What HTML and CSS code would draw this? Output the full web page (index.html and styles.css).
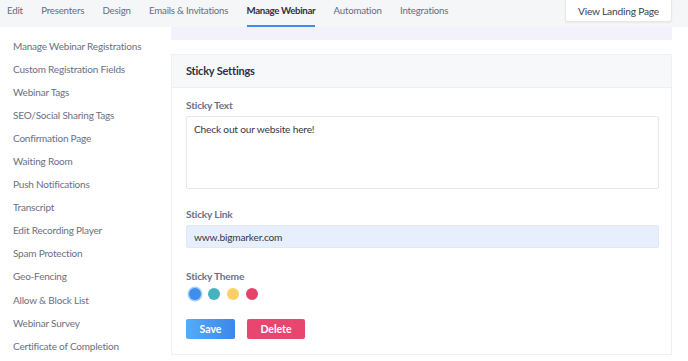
FILE: index.html
```html
<!DOCTYPE html>
<html lang="en">
<head>
    <meta charset="UTF-8">
    <meta name="viewport" content="width=device-width, initial-scale=1.0">
    <title>Manage Webinar</title>
    <link rel="stylesheet" href="styles.css">
</head>
<body>
    <div class="topbar">
        <nav class="tabs">
            <a href="#">Edit</a>
            <a href="#">Presenters</a>
            <a href="#">Design</a>
            <a href="#">Emails &amp; Invitations</a>
            <a href="#" class="active">Manage Webinar</a>
            <a href="#">Automation</a>
            <a href="#">Integrations</a>
        </nav>
        <button class="landing-btn">View Landing Page</button>
    </div>

    <div class="layout">
        <aside class="sidebar">
            <a href="#">Manage Webinar Registrations</a>
            <a href="#">Custom Registration Fields</a>
            <a href="#">Webinar Tags</a>
            <a href="#">SEO/Social Sharing Tags</a>
            <a href="#">Confirmation Page</a>
            <a href="#">Waiting Room</a>
            <a href="#">Push Notifications</a>
            <a href="#">Transcript</a>
            <a href="#">Edit Recording Player</a>
            <a href="#">Spam Protection</a>
            <a href="#">Geo-Fencing</a>
            <a href="#">Allow &amp; Block List</a>
            <a href="#">Webinar Survey</a>
            <a href="#">Certificate of Completion</a>
        </aside>

        <main class="main">
            <div class="banner"></div>

            <section class="card">
                <div class="card-header">Sticky Settings</div>
                <div class="card-body">
                    <div class="form-group">
                        <label for="stickyText">Sticky Text</label>
                        <textarea id="stickyText">Check out our website here!</textarea>
                    </div>
                    <div class="form-group link-group">
                        <label for="stickyLink">Sticky Link</label>
                        <input type="text" id="stickyLink" value="www.bigmarker.com">
                    </div>
                    <div class="form-group">
                        <label>Sticky Theme</label>
                        <div class="swatches">
                            <span class="swatch blue selected"></span>
                            <span class="swatch teal"></span>
                            <span class="swatch yellow"></span>
                            <span class="swatch pink"></span>
                        </div>
                    </div>
                    <div class="actions">
                        <button class="btn btn-save">Save</button>
                        <button class="btn btn-delete">Delete</button>
                    </div>
                </div>
            </section>
        </main>
    </div>
</body>
</html>
```

FILE: styles.css
```css
* {
    margin: 0;
    padding: 0;
    box-sizing: border-box;
}

body {
    font-family: Lato, "Open Sans", sans-serif;
    background-color: white;
    color: #5f6579;
    font-size: 10px;
    letter-spacing: -0.2px;
}

a {
    text-decoration: none;
    color: inherit;
}

.topbar {
    display: flex;
    justify-content: space-between;
    height: 27px;
    padding: 0 16px 0 7px;
    background-color: #f5f6f8;
}

.tabs {
    display: flex;
    gap: 18.3px;
}

.tabs a {
    padding-top: 4px;
    height: 27px;
    line-height: 13px;
    font-size: 9.7px;
    color: #666c7e;
    border-bottom: 2px solid transparent;
}

.tabs a.active {
    color: #2f3344;
    font-weight: 700;
    letter-spacing: -0.35px;
    border-bottom-color: #3d8de9;
}

.landing-btn {
    align-self: flex-start;
    width: 107px;
    height: 22px;
    background-color: white;
    border: 1px solid #e6e8ec;
    border-top: none;
    border-radius: 0 0 3px 3px;
    box-shadow: 0 1px 2px rgba(0, 0, 0, 0.05);
    font-family: inherit;
    font-size: 10.2px;
    letter-spacing: -0.2px;
    color: #3a3f50;
}

.layout {
    display: flex;
}

.sidebar {
    width: 171px;
    display: flex;
    flex-direction: column;
    padding: 11.5px 0 0 13px;
}

.sidebar a {
    height: 23.1px;
    line-height: 14px;
    color: #6a7083;
    white-space: nowrap;
}

.main {
    width: 501px;
}

.banner {
    height: 13px;
    background-color: #f3f2fc;
}

.card {
    margin-top: 14px;
    border: 1px solid #eef0f3;
    height: 301px;
}

.card-header {
    height: 33px;
    padding: 9px 14px;
    background-color: #f7f8fa;
    border-bottom: 1px solid #eceef2;
    font-size: 11px;
    font-weight: 700;
    color: #2c3040;
}

.card-body {
    padding: 11px 14px 0 14px;
}

.form-group {
    margin-bottom: 19px;
}

.link-group {
    margin-bottom: 22px;
}

label {
    display: block;
    height: 17px;
    font-size: 10.2px;
    font-weight: 700;
    color: #6b7287;
}

textarea,
input {
    display: block;
    width: 473px;
    font-family: inherit;
    font-size: 10.2px;
    letter-spacing: -0.2px;
    color: #333849;
    border: 1px solid #e4e6ea;
    border-radius: 2px;
    padding: 6px 7px;
    outline: none;
}

textarea {
    height: 73px;
    resize: none;
}

input {
    height: 23px;
    background-color: #e8effc;
    border-color: #e1e8f4;
}

.swatches {
    display: flex;
    gap: 7px;
    padding-left: 3px;
    padding-top: 1px;
}

.swatch {
    width: 12px;
    height: 12px;
    border-radius: 50%;
}

.swatch.selected {
    box-shadow: 0 0 0 1.5px #a9cdf6;
}

.swatch.blue {
    background-color: #3e8ef0;
}

.swatch.teal {
    background-color: #45b3c0;
}

.swatch.yellow {
    background-color: #fbcf63;
}

.swatch.pink {
    background-color: #e6436b;
}

.actions {
    display: flex;
    gap: 12px;
    margin-top: 8px;
}

.btn {
    height: 20px;
    border: none;
    border-radius: 2px;
    font-family: inherit;
    font-size: 10.5px;
    font-weight: 700;
    color: white;
}

.btn-save {
    width: 49px;
    background: linear-gradient(90deg, #55acf6, #3d86ea);
}

.btn-delete {
    width: 58px;
    background-color: #e8466e;
}
```
